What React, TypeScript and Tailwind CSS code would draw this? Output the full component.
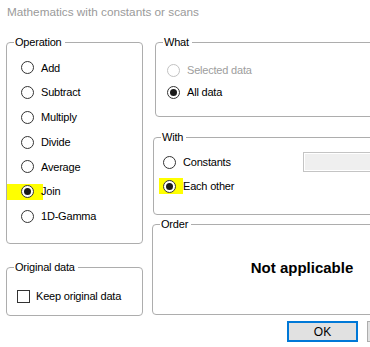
import type { ReactNode } from "react";

const OPERATIONS = ["Add", "Subtract", "Multiply", "Divide", "Average", "Join", "1D-Gamma"];

function Radio({ checked = false, disabled = false }: { checked?: boolean; disabled?: boolean }) {
  return (
    <span
      className={`relative flex h-[13px] w-[13px] shrink-0 items-center justify-center rounded-full border bg-white ${
        disabled ? "border-[#c2c2c2]" : "border-[#333]"
      }`}
    >
      {checked && <span className="h-[7px] w-[7px] rounded-full bg-[#1a1a1a]" />}
    </span>
  );
}

function Group({ label, className, children }: { label: string; className: string; children?: ReactNode }) {
  return (
    <fieldset className={`rounded-[4px] border border-[#adadad] ${className}`}>
      <legend className="ml-[7px] pl-[1px] pr-[3px] leading-[14px]">{label}</legend>
      {children}
    </fieldset>
  );
}

export default function App() {
  return (
    <div className="h-[347px] w-[370px] overflow-hidden bg-white text-[11px] tracking-[-0.2px] text-black [font-family:'Liberation_Sans',Arial,sans-serif]">
      <div className="h-[35px] pl-[7px] pt-[5px] text-[11.75px] leading-[14px] tracking-normal text-[#9a9a9a]">
        Mathematics with constants or scans
      </div>

      <div className="flex">
        {/* left column */}
        <div className="ml-[6px] flex w-[137px] shrink-0 flex-col">
          <Group label="Operation" className="h-[209px] pt-[6.5px]">
            {OPERATIONS.map((op) => (
              <div key={op} className="relative flex h-[24.75px] items-center gap-[7px] pl-[14px]">
                {op === "Join" && (
                  <span className="absolute left-0 top-1/2 h-[16px] w-[36px] -translate-y-1/2 bg-[#ffff00]" />
                )}
                <Radio checked={op === "Join"} />
                <span className="relative">{op}</span>
              </div>
            ))}
          </Group>

          <Group label="Original data" className="mt-[16px] h-[56px] pt-[10px]">
            <div className="flex h-[24px] items-center gap-[6px] pl-[10px]">
              <span className="h-[13px] w-[13px] border border-[#333] bg-white" />
              <span>Keep original data</span>
            </div>
          </Group>
        </div>

        {/* right column */}
        <div className="ml-[9px] flex w-[300px] shrink-0 flex-col">
          <Group label="What" className="ml-[3px] h-[82px] pt-[10px]">
            <div className="flex h-[22px] items-center gap-[7px] pl-[11px] text-[#9d9d9d]">
              <Radio disabled />
              <span>Selected data</span>
            </div>
            <div className="flex h-[22px] items-center gap-[7px] pl-[11px]">
              <Radio checked />
              <span>All data</span>
            </div>
          </Group>

          <Group label="With" className="ml-[1px] mt-[13px] h-[85px] pt-[6px]">
            <div className="flex h-[24px] items-center">
              <div className="flex w-[149px] items-center gap-[7px] pl-[9px]">
                <Radio />
                <span>Constants</span>
              </div>
              <div className="h-[20px] w-[100px] border border-[#c4c4c4] bg-[#efefef] shadow-[inset_0_0_0_1px_#fff]" />
            </div>
            <div className="relative flex h-[24px] items-center gap-[7px] pl-[9px]">
              <span className="absolute left-[5px] top-1/2 h-[16px] w-[24px] -translate-y-1/2 bg-[#ffff00]" />
              <Radio checked />
              <span className="relative">Each other</span>
            </div>
          </Group>

          <Group label="Order" className="mt-[2px] h-[98px] pt-[28px]">
            <div className="text-center text-[15px] font-bold leading-[18px] tracking-normal">Not applicable</div>
          </Group>

          <div className="mt-[6px] flex gap-[9px] pl-[135px]">
            <button className="flex h-[21px] w-[71px] shrink-0 items-center justify-center border-2 border-[#0078d7] bg-[#e1e1e1] text-[12px] tracking-normal">
              OK
            </button>
            <button className="h-[21px] w-[71px] shrink-0 border border-[#adadad] bg-[#e1e1e1]" />
          </div>
        </div>
      </div>
    </div>
  );
}
